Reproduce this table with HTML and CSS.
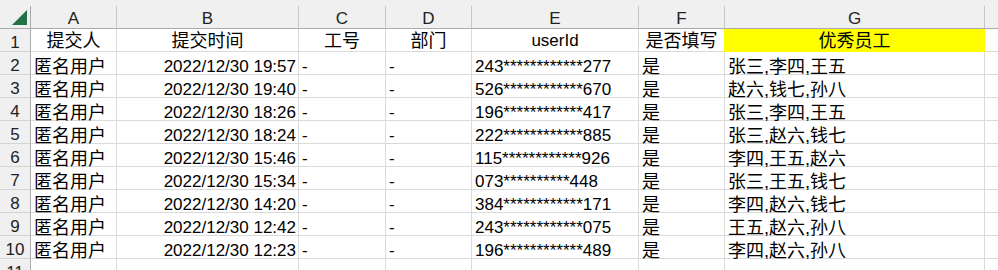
FILE: index.html
```html
<!DOCTYPE html>
<html lang="zh-CN">
<head>
<meta charset="utf-8">
<title>Sheet</title>
<link rel="stylesheet" href="styles.css">
</head>
<body>
<div class="sheet">
  <div class="grid">
    <div class="corner"><div class="tri"></div></div>
    <div class="colh">A</div>
    <div class="colh">B</div>
    <div class="colh">C</div>
    <div class="colh">D</div>
    <div class="colh">E</div>
    <div class="colh">F</div>
    <div class="colh">G</div>
    <div class="colh"></div>

    <div class="rowh">1</div>
    <div class="cell hd zh">提交人</div>
    <div class="cell hd zh">提交时间</div>
    <div class="cell hd zh">工号</div>
    <div class="cell hd zh">部门</div>
    <div class="cell hd">userId</div>
    <div class="cell hd zh">是否填写</div>
    <div class="cell hd zh hl">优秀员工</div>
    <div class="cell"></div>

    <div class="rowh">2</div>
    <div class="cell zh">匿名用户</div>
    <div class="cell num">2022/12/30 19:57</div>
    <div class="cell">-</div>
    <div class="cell">-</div>
    <div class="cell">243************277</div>
    <div class="cell zh">是</div>
    <div class="cell zh">张三,李四,王五</div>
    <div class="cell"></div>

    <div class="rowh">3</div>
    <div class="cell zh">匿名用户</div>
    <div class="cell num">2022/12/30 19:40</div>
    <div class="cell">-</div>
    <div class="cell">-</div>
    <div class="cell">526************670</div>
    <div class="cell zh">是</div>
    <div class="cell zh">赵六,钱七,孙八</div>
    <div class="cell"></div>

    <div class="rowh">4</div>
    <div class="cell zh">匿名用户</div>
    <div class="cell num">2022/12/30 18:26</div>
    <div class="cell">-</div>
    <div class="cell">-</div>
    <div class="cell">196************417</div>
    <div class="cell zh">是</div>
    <div class="cell zh">张三,李四,王五</div>
    <div class="cell"></div>

    <div class="rowh">5</div>
    <div class="cell zh">匿名用户</div>
    <div class="cell num">2022/12/30 18:24</div>
    <div class="cell">-</div>
    <div class="cell">-</div>
    <div class="cell">222************885</div>
    <div class="cell zh">是</div>
    <div class="cell zh">张三,赵六,钱七</div>
    <div class="cell"></div>

    <div class="rowh">6</div>
    <div class="cell zh">匿名用户</div>
    <div class="cell num">2022/12/30 15:46</div>
    <div class="cell">-</div>
    <div class="cell">-</div>
    <div class="cell">115************926</div>
    <div class="cell zh">是</div>
    <div class="cell zh">李四,王五,赵六</div>
    <div class="cell"></div>

    <div class="rowh">7</div>
    <div class="cell zh">匿名用户</div>
    <div class="cell num">2022/12/30 15:34</div>
    <div class="cell">-</div>
    <div class="cell">-</div>
    <div class="cell">073**********448</div>
    <div class="cell zh">是</div>
    <div class="cell zh">张三,王五,钱七</div>
    <div class="cell"></div>

    <div class="rowh">8</div>
    <div class="cell zh">匿名用户</div>
    <div class="cell num">2022/12/30 14:20</div>
    <div class="cell">-</div>
    <div class="cell">-</div>
    <div class="cell">384************171</div>
    <div class="cell zh">是</div>
    <div class="cell zh">李四,赵六,钱七</div>
    <div class="cell"></div>

    <div class="rowh">9</div>
    <div class="cell zh">匿名用户</div>
    <div class="cell num">2022/12/30 12:42</div>
    <div class="cell">-</div>
    <div class="cell">-</div>
    <div class="cell">243************075</div>
    <div class="cell zh">是</div>
    <div class="cell zh">王五,赵六,孙八</div>
    <div class="cell"></div>

    <div class="rowh">10</div>
    <div class="cell zh">匿名用户</div>
    <div class="cell num">2022/12/30 12:23</div>
    <div class="cell">-</div>
    <div class="cell">-</div>
    <div class="cell">196************489</div>
    <div class="cell zh">是</div>
    <div class="cell zh">李四,赵六,孙八</div>
    <div class="cell"></div>

    <div class="rowh">11</div>
    <div class="cell"></div>
    <div class="cell"></div>
    <div class="cell"></div>
    <div class="cell"></div>
    <div class="cell"></div>
    <div class="cell"></div>
    <div class="cell"></div>
    <div class="cell"></div>
  </div>
</div>
</body>
</html>
```

FILE: styles.css
```css
html, body {
  margin: 0;
  padding: 0;
  background: #ffffff;
}

.sheet {
  width: 998px;
  height: 270px;
  overflow: hidden;
  box-sizing: border-box;
  padding-top: 6px;
  background: #f0f0f0;
  font-family: "Liberation Sans", "Noto Sans CJK SC", sans-serif;
  font-size: 17px;
  color: #000000;
}

.grid {
  display: grid;
  grid-template-columns: 31px 86px 182px 87px 86px 167px 86px 260px 60px;
  grid-auto-rows: 23px;
  width: 1045px;
}

.grid > div {
  box-sizing: border-box;
  display: flex;
  align-items: flex-end;
  white-space: nowrap;
  line-height: 14px;
}

.corner {
  background: #f0f0f0;
  border-right: 1px solid #ababab;
  border-bottom: 1px solid #ababab;
  justify-content: flex-end;
  padding: 0 3px 3px 0;
}

.tri {
  width: 15px;
  height: 15px;
  background: #217346;
  clip-path: polygon(100% 0, 100% 100%, 0 100%);
}

.colh {
  background: #f0f0f0;
  border-right: 1px solid #c6c6c6;
  border-bottom: 1px solid #ababab;
  justify-content: center;
  padding-bottom: 2px;
  color: #222222;
}

.rowh {
  background: #f0f0f0;
  border-right: 1px solid #ababab;
  border-bottom: 1px solid #d4d4d4;
  justify-content: center;
  padding-bottom: 1px;
  color: #222222;
}

.cell {
  background: #ffffff;
  border-right: 1px solid #dadada;
  border-bottom: 1px solid #dadada;
  padding-left: 3px;
}

.zh {
  font-size: 18px;
}

.num {
  justify-content: flex-end;
  padding-left: 0;
  padding-right: 2px;
}

.hd {
  justify-content: center;
  padding-left: 0;
  padding-bottom: 3px;
}

.hl {
  background: #ffff00;
  border-right-color: #ffff00;
  border-bottom-color: #ffff00;
  box-shadow: -1px 0 0 #ffff00;
}
```
